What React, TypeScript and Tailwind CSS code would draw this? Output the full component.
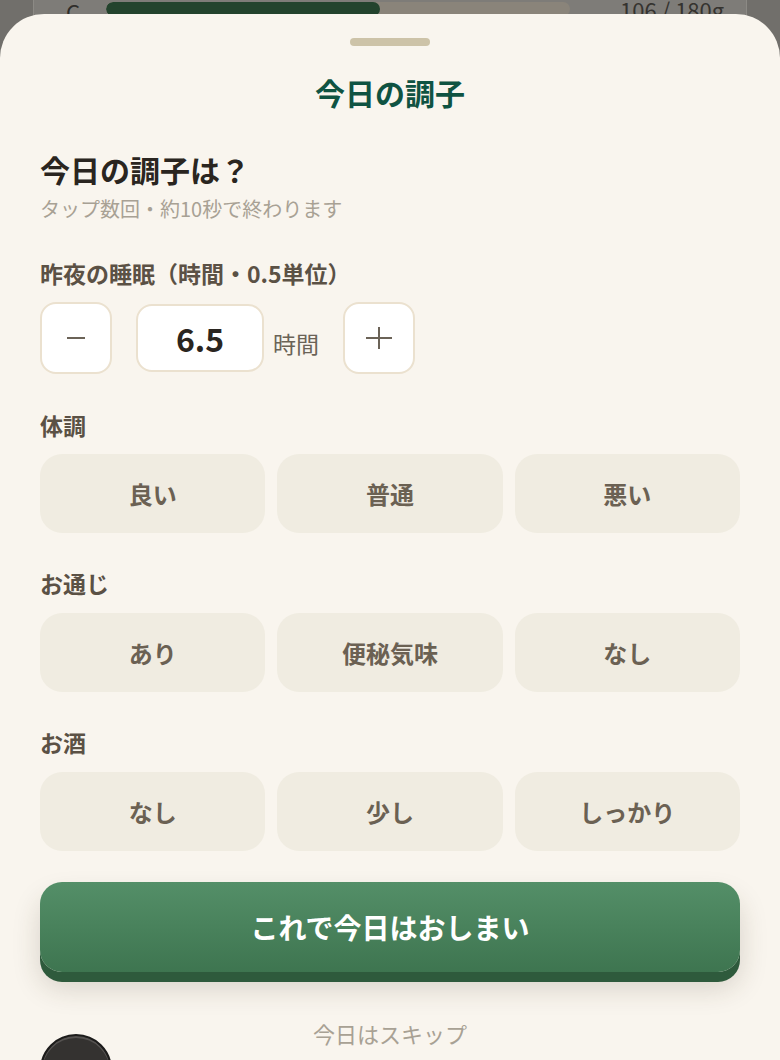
import React from 'react'

const font = { fontFamily: '"Noto Sans CJK JP", "Noto Sans", sans-serif' }

const groups = [
  { label: '体調', options: ['良い', '普通', '悪い'] },
  { label: 'お通じ', options: ['あり', '便秘気味', 'なし'] },
  { label: 'お酒', options: ['なし', '少し', 'しっかり'] },
]

const Backdrop = () => (
  <div className="absolute inset-x-0 top-0 h-[40px] bg-[#716f6b]">
    <div className="mx-[33px] h-full bg-[#7e7c78] border-x border-[#8c8a85] flex items-start">
      <span className="ml-[32px] -mt-[4px] text-[22px] leading-[30px] text-[#2f2d2a]">C</span>
      <div className="ml-[26px] mt-[2px] w-[464px] h-[14px] rounded-full bg-[#8a847a] overflow-hidden">
        <div className="w-[274px] h-full rounded-full bg-[#23432d]" />
      </div>
      <span className="ml-[50px] -mt-[6px] text-[22px] leading-[30px] text-[#35332f]">106 / 180g</span>
    </div>
  </div>
)

const Stepper = () => (
  <div className="flex items-center mt-[13px]">
    <button className="w-[72px] h-[72px] rounded-[16px] bg-white border-2 border-[#ebe1cf] flex items-center justify-center">
      <svg width="20" height="4" viewBox="0 0 20 4">
        <line x1="1" y1="2" x2="19" y2="2" stroke="#6b6357" strokeWidth="2" />
      </svg>
    </button>
    <div className="ml-[24px] w-[128px] h-[68px] rounded-[16px] bg-white border-2 border-[#ebe1cf] flex items-center justify-center">
      <span className="text-[32px] font-bold text-[#2a2520] leading-none">6.5</span>
    </div>
    <span className="ml-[9px] mt-[10px] text-[23px] text-[#6b6357]">時間</span>
    <button className="ml-[24px] w-[72px] h-[72px] rounded-[16px] bg-white border-2 border-[#ebe1cf] flex items-center justify-center">
      <svg width="28" height="24" viewBox="0 0 28 24">
        <line x1="1" y1="12" x2="27" y2="12" stroke="#6b6357" strokeWidth="2" />
        <line x1="14" y1="1" x2="14" y2="23" stroke="#6b6357" strokeWidth="2" />
      </svg>
    </button>
  </div>
)

export default function App() {
  return (
    <div style={font} className="relative w-[780px] h-[1060px] overflow-hidden bg-[#716f6b]">
      <Backdrop />
      <div className="relative mt-[14px] h-[1046px] rounded-t-[44px] bg-[#f9f5ee] flex flex-col">
        {/* Handle */}
        <div className="mx-auto mt-[24px] w-[80px] h-[8px] rounded-full bg-[#cdc3a8]" />
        <h1 className="mt-[26px] text-center text-[30px] leading-[40px] font-bold text-[#0f5342]">今日の調子</h1>

        <div className="px-[40px]">
          <h2 className="mt-[37px] text-[30px] leading-[40px] font-bold text-[#2a2520]">今日の調子は？</h2>
          <p className="mt-[6px] text-[20px] leading-[28px] text-[#a8a194]">タップ数回・約10秒で終わります</p>

          <p className="mt-[34px] text-[23px] leading-[32px] font-bold text-[#5b5145]">昨夜の睡眠（時間・0.5単位）</p>
          <Stepper />

          {groups.map((g, i) => (
            <div key={g.label} className={i === 0 ? 'mt-[36px]' : 'mt-[35px]'}>
              <p className="text-[23px] leading-[30px] font-bold text-[#5b5145]">{g.label}</p>
              <div className={`${i === 0 ? 'mt-[14px]' : 'mt-[15px]'} grid grid-cols-3 gap-3`}>
                {g.options.map((o) => (
                  <button
                    key={o}
                    className="h-[79px] rounded-[22px] bg-[#f0ece1] text-[24px] font-bold text-[#6b6153]"
                  >
                    {o}
                  </button>
                ))}
              </div>
            </div>
          ))}

          <button className="mt-[31px] w-full h-[90px] rounded-[22px] bg-gradient-to-b from-[#548f68] to-[#3e7550] shadow-[0_10px_0_#2e5a3c,0_16px_28px_rgba(60,50,30,0.18)] text-white text-[28px] font-bold">
            これで今日はおしまい
          </button>

          <p className="mt-[46px] text-center text-[22px] leading-[30px] text-[#a8a194]">今日はスキップ</p>
        </div>

        {/* Floating round button */}
        <div className="absolute left-[40px] top-[1020px] w-[72px] h-[72px] rounded-full bg-[#343230] border-2 border-[#1c1b1a] shadow-[inset_0_2px_0_#555250]" />
      </div>
    </div>
  )
}
